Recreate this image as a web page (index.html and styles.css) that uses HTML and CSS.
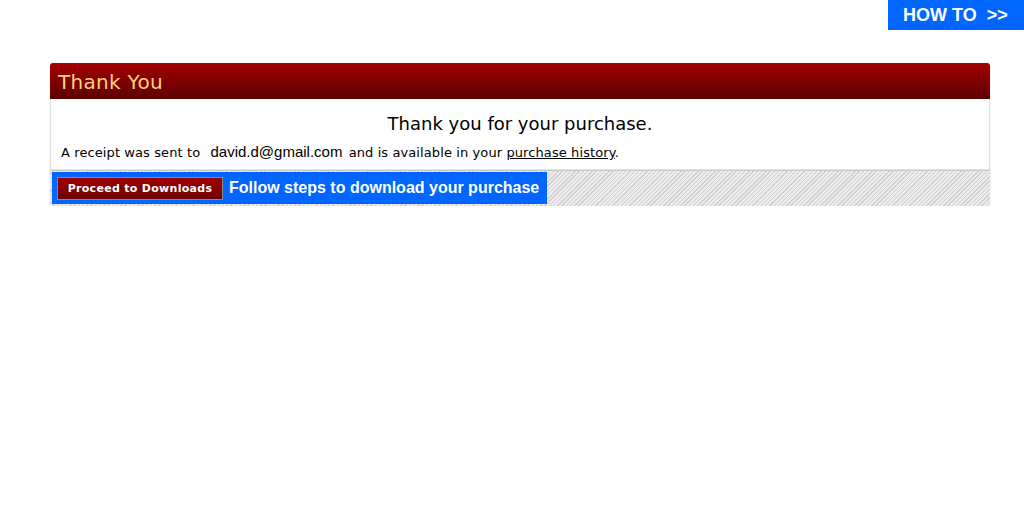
FILE: index.html
```html
<!DOCTYPE html>
<html lang="en">
<head>
    <meta charset="UTF-8">
    <title>Thank You</title>
    <link rel="stylesheet" href="styles.css">
</head>
<body>
    <div class="topbar">
        <a class="howto" href="#">HOW TO&nbsp;&nbsp;&gt;&gt;</a>
    </div>

    <div class="panel">
        <div class="panel-head">Thank You</div>
        <div class="panel-body">
            <h2>Thank you for your purchase.</h2>
            <p class="receipt">A receipt was sent to <span class="email">david.d@gmail.com</span> and is available in your <a href="#">purchase history</a>.</p>
        </div>
        <div class="panel-foot">
            <div class="steps">
                <button class="proceed">Proceed to Downloads</button>
                <span class="steps-text">Follow steps to download your purchase</span>
            </div>
        </div>
    </div>
</body>
</html>
```

FILE: styles.css
```css
body {
    margin: 0;
    background: #fff;
    font-family: "DejaVu Sans", Verdana, sans-serif;
    color: #000;
}

.topbar {
    display: flex;
    justify-content: flex-end;
    height: 30px;
}

.howto {
    display: flex;
    align-items: center;
    width: 136px;
    padding-left: 15px;
    box-sizing: border-box;
    background: #0066ff;
    color: #fff;
    font-family: "Liberation Sans", Arial, sans-serif;
    font-weight: bold;
    font-size: 18px;
    text-decoration: none;
}

.panel {
    margin: 33px 34px 0 50px;
    border-radius: 3px;
    box-shadow: 0 1px 2px rgba(0,0,0,0.15);
}

.panel-head {
    height: 36px;
    padding-left: 8px;
    border-radius: 3px 3px 0 0;
    background: linear-gradient(#a50000, #5c0000);
    color: #ffd27a;
    font-size: 20px;
    letter-spacing: 0.3px;
    line-height: 38px;
}

.panel-body {
    border: 1px solid #e4e4e4;
    border-top: none;
    padding: 13px 10px 6px;
}

.panel-body h2 {
    margin: 0 0 6px;
    text-align: center;
    font-size: 18px;
    font-weight: normal;
    line-height: 24px;
}

.receipt {
    margin: 0;
    font-size: 13px;
    letter-spacing: 0.1px;
    line-height: 20px;
}

.email {
    font-family: "Liberation Sans", Arial, sans-serif;
    font-size: 15px;
    letter-spacing: 0;
    margin: 0 2px 0 6px;
}

.receipt a {
    color: #000;
}

.panel-foot {
    border-top: 1px solid #c8c8c8;
    padding: 1px 2px 2px;
    background: repeating-linear-gradient(135deg, #ececec 0 2px, #d0d0d0 2px 3px);
}

.steps {
    display: inline-flex;
    align-items: center;
    height: 32px;
    padding: 0 8px 0 5px;
    gap: 6px;
    background: #0066ff;
}

.proceed {
    height: 23px;
    width: 166px;
    padding: 0;
    border: 1px solid #8a8a8a;
    background: linear-gradient(#a00000, #700000);
    color: #fff;
    font-family: "DejaVu Sans", Verdana, sans-serif;
    font-size: 11px;
    font-weight: bold;
    letter-spacing: 0.3px;
}

.steps-text {
    color: #fff;
    font-family: "Liberation Sans", Arial, sans-serif;
    font-size: 16px;
    font-weight: bold;
}
```
